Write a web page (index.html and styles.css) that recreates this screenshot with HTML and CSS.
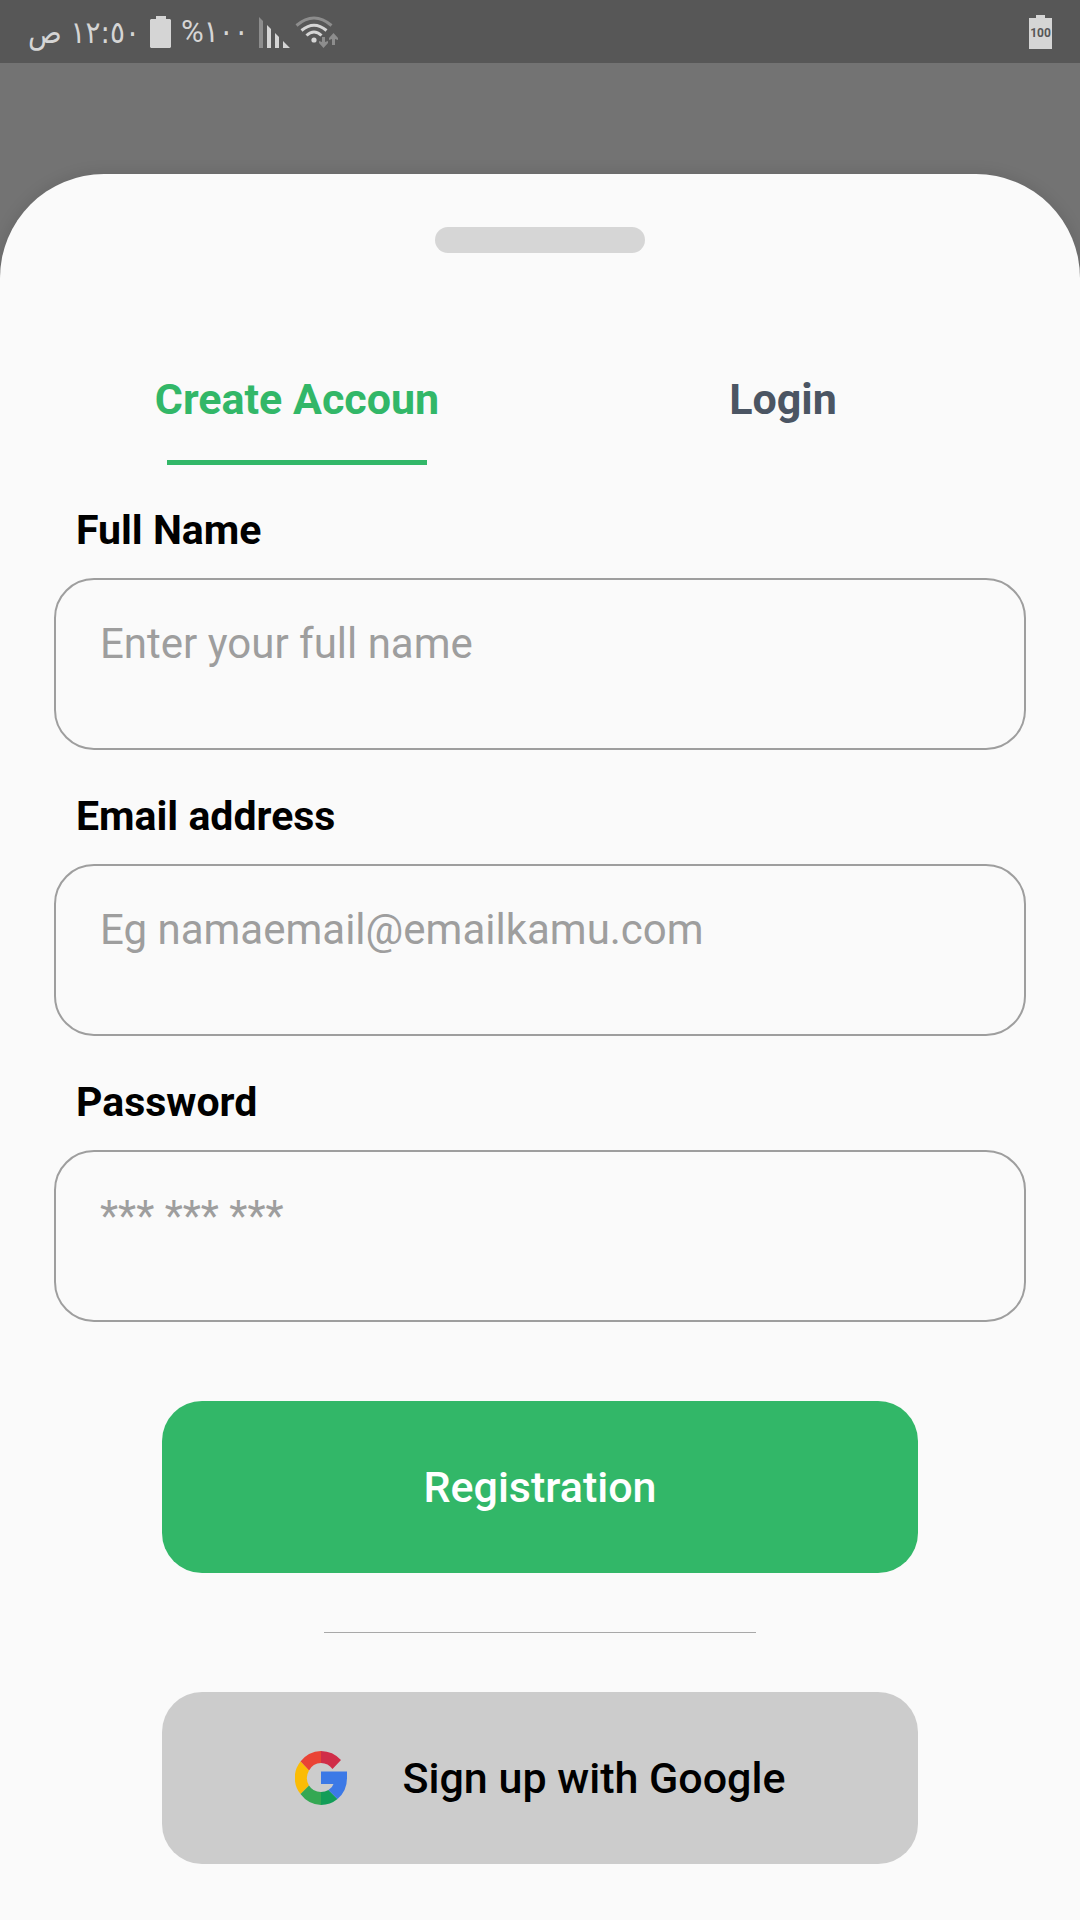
FILE: index.html
```html
<!DOCTYPE html>
<html lang="en">
<head>
<meta charset="utf-8">
<meta name="viewport" content="width=device-width, initial-scale=1">
<title>Create Account</title>
<link rel="stylesheet" href="styles.css">
</head>
<body>
<div class="screen">
  <header class="status">
    <div class="status-group">
      <span class="status-text" lang="ar" dir="rtl">١٢:٥٠ ص</span>
      <svg class="battery" width="21" height="32" viewBox="0 0 21 32" aria-hidden="true"><path d="M6 0h10v3h4l1 1v27l-1 1H1l-1-1V4l1-1h5z"/></svg>
      <span class="status-text" lang="ar"><span class="percent">%</span>١٠٠</span>
      <svg class="signals" width="80" height="34" viewBox="257 14 80 34" aria-hidden="true">
        <path class="dim" d="M257 16l4 4v27h-4z"/>
        <path class="lit" d="M265 24l4 4v19h-4zM273 32l4 4v11h-4zM281 40l7 7h-7z"/>
        <g class="arcs">
          <path class="dim-line" d="M294.500 24.500Q312 9.500 329.500 24.500"/>
          <path class="lit-line" d="M299.500 29.500Q312 19 324.500 29.500M304.500 34.500Q312 27.500 319.500 34.500"/>
        </g>
        <circle class="lit" cx="312" cy="39" r="2.600"/>
        <path class="dim" d="M320 36h3v5l3-1v2l-4.500 5-4.500-5v-2l3 1zM330 44h3v-6l3 1v-2l-4.500-5-4.500 5v2l3-1z"/>
      </svg>
    </div>
    <div class="battery-level">
      <svg class="battery" width="23" height="34" viewBox="0 0 23 34" aria-hidden="true"><path d="M7 0h9v3h7v31H0V3h7z"/></svg>
      <span class="battery-value">100</span>
    </div>
  </header>

  <main class="sheet">
    <div class="handle"></div>
    <div class="tabs" role="tablist">
      <button class="tab tab-active" type="button" role="tab" aria-selected="true">Create Accoun</button>
      <button class="tab" type="button" role="tab" aria-selected="false">Login</button>
    </div>
    <form class="form">
      <div class="field">
        <label class="label" for="name">Full Name</label>
        <input class="input" id="name" type="text" placeholder="Enter your full name">
      </div>
      <div class="field">
        <label class="label" for="email">Email address</label>
        <input class="input" id="email" type="email" placeholder="Eg namaemail@emailkamu.com">
      </div>
      <div class="field">
        <label class="label" for="password">Password</label>
        <input class="input" id="password" type="password" placeholder="*** *** ***">
      </div>
      <div class="actions">
        <button class="button button-primary" type="submit">Registration</button>
        <hr class="divider">
        <button class="button button-google" type="button">
          <svg width="52" height="54" viewBox="0 0 52 54" aria-hidden="true">
            <path fill="#ea4335" d="M26 0A27 27 0 0 0 5.500 10.500L14 19.500A14 14 0 0 1 26 12z"/>
            <path fill="#d02d48" d="M26 0A28 28 0 0 1 46 9L37.500 18A15 15 0 0 0 26 12z"/>
            <path fill="#fbbc05" d="M5.500 10.500A26 26 0 0 0 5.500 43L14 34.500A15 15 0 0 1 14 19.500z"/>
            <path fill="#34a853" d="M5.500 43A27 27 0 0 0 26 54V41A14 14 0 0 1 14 34.500z"/>
            <path fill="#129d58" d="M26 54A26 26 0 0 0 42.500 48L33.500 39A16 16 0 0 1 26 41z"/>
            <path fill="#3c79e6" d="M26 20.500H52V27Q52 40 42.500 48L33.500 39Q37.500 36.500 38.500 33H26z"/>
          </svg>
          <span>Sign up with Google</span>
        </button>
      </div>
    </form>
  </main>
</div>
</body>
</html>
```
FILE: styles.css
```css
* {
  box-sizing: border-box;
}

body {
  margin: 0;
  background: #737373;
  color: #000;
  font-family: Roboto, "Liberation Sans", sans-serif;
}

button,
input {
  font-family: inherit;
}

.screen {
  display: flex;
  flex-direction: column;
  min-height: 100vh;
}

.status {
  display: flex;
  justify-content: space-between;
  align-items: center;
  height: 63px;
  padding: 0 28px;
  background: #575757;
  color: #d5d5d5;
}

.status-group {
  display: flex;
  align-items: center;
  gap: 10px;
}

.status-text {
  font-family: "DejaVu Sans Condensed", "DejaVu Sans", sans-serif;
  font-size: 31px;
  line-height: 48px;
  white-space: nowrap;
}

.percent {
  font-family: Roboto, sans-serif;
}

.battery,
.lit {
  fill: #d5d5d5;
}

.dim {
  fill: #8d8d8d;
}

.arcs {
  fill: none;
  stroke-width: 3;
}

.dim-line {
  stroke: #8d8d8d;
}

.lit-line {
  stroke: #d5d5d5;
}

.battery-level {
  display: grid;
  place-items: center;
}

.battery-level > * {
  grid-area: 1 / 1;
}

.battery-value {
  padding-top: 3px;
  color: #575757;
  font-size: 12px;
  font-weight: 700;
  line-height: 16px;
}

.sheet {
  flex: 1;
  margin-top: 111px;
  padding: 53px 0 55px;
  border-radius: 104px 104px 0 0;
  background: #fafafa;
  box-shadow: 0 0 16px rgba(0, 0, 0, 0.12);
}

.handle {
  width: 210px;
  height: 26px;
  margin: 0 auto 124px;
  border-radius: 13px;
  background: #d6d6d6;
}

.tabs {
  display: grid;
  grid-template-columns: 1fr 1fr;
  margin: 0 5% 44px;
}

.tab {
  display: flex;
  flex-direction: column;
  align-items: center;
  gap: 39px;
  padding: 0;
  border: 0;
  background: none;
  color: #4b5563;
  font-size: 43px;
  font-weight: 700;
  line-height: 44px;
}

.tab::after {
  content: "";
  width: 260px;
  height: 5px;
}

.tab-active {
  color: #32b768;
}

.tab-active::after {
  background: #32b768;
}

.form {
  display: flex;
  flex-direction: column;
  gap: 45px;
}

.field {
  display: flex;
  flex-direction: column;
  gap: 26px;
  padding: 0 5%;
}

.label {
  padding-left: 22px;
  font-size: 41px;
  font-weight: 700;
  line-height: 43px;
}

.input {
  width: 100%;
  height: 172px;
  padding: 0 44px 42px;
  border: 2px solid #9e9e9e;
  border-radius: 40px;
  background: none;
  font-size: 42px;
}

.input::placeholder {
  color: #9e9e9e;
  opacity: 1;
}

.actions {
  display: flex;
  flex-direction: column;
  align-items: center;
  gap: 59px;
  padding-top: 34px;
}

.button {
  display: flex;
  justify-content: center;
  align-items: center;
  gap: 56px;
  width: 70%;
  height: 172px;
  padding: 0;
  border: 0;
  border-radius: 40px;
  font-size: 43px;
  font-weight: 500;
  line-height: 48px;
}

.button-primary {
  background: #32b768;
  color: #fff;
}

.button-google {
  background: #ccc;
  color: #000;
}

.divider {
  width: 40%;
  height: 1px;
  margin: 0;
  border: 0;
  background: #a8a8a8;
}
```
